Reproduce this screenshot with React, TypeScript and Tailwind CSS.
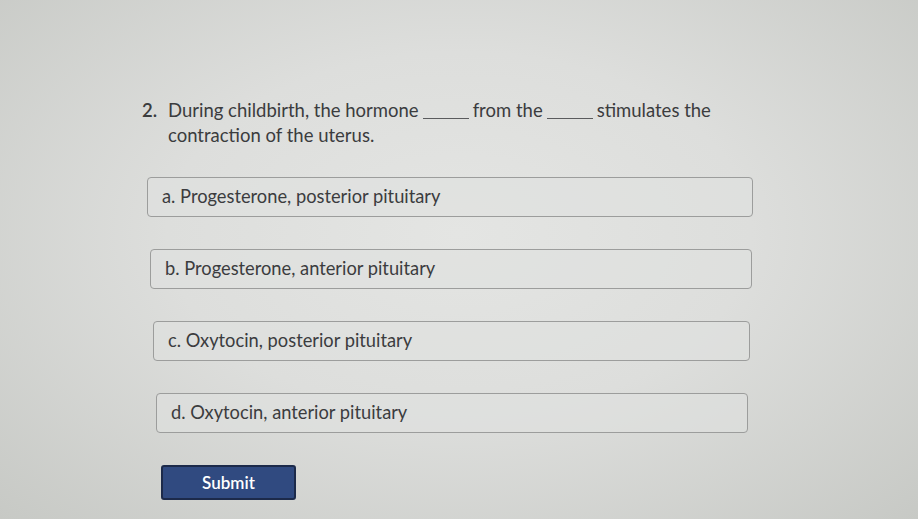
import React from "react";

const options = [
  { label: "a. Progesterone, posterior pituitary", shift: "ml-[147px] w-[606px]" },
  { label: "b. Progesterone, anterior pituitary", shift: "ml-[150px] w-[602px]" },
  { label: "c. Oxytocin, posterior pituitary", shift: "ml-[153px] w-[597px]" },
  { label: "d. Oxytocin, anterior pituitary", shift: "ml-[156px] w-[592px]" },
];

export default function App() {
  return (
    <div
      className="w-[918px] h-[519px] overflow-hidden bg-[radial-gradient(ellipse_at_50%_45%,#e4e5e3_0%,#dddedc_45%,#c7c9c5_100%)] text-[#3b3c3e]"
      style={{ fontFamily: "Lato, 'Noto Sans', sans-serif" }}
    >
      <div className="pt-[98px]">
        {/* question */}
        <div className="flex ml-[142px] text-[18.5px] leading-[25px]">
          <span className="w-[26px] font-semibold">2.</span>
          <div>
            <div className="flex items-end">
              <span>During childbirth, the hormone</span>
              <span className="inline-block w-[46px] h-[1px] bg-[#5a5b5d] mx-[4px] mb-[4px]" />
              <span>from the</span>
              <span className="inline-block w-[46px] h-[1px] bg-[#5a5b5d] mx-[4px] mb-[4px]" />
              <span>stimulates the</span>
            </div>
            <div>contraction of the uterus.</div>
          </div>
        </div>

        {/* answer choices */}
        <div className="mt-[29px] flex flex-col gap-[32px]">
          {options.map((o) => (
            <div
              key={o.label}
              className={`${o.shift} h-[40px] flex items-center px-[14px] rounded-[4px] border border-[#9c9d9c] bg-[#e0e1df]/60 text-[18.3px]`}
            >
              {o.label}
            </div>
          ))}
        </div>

        <button className="mt-[32px] ml-[161px] w-[135px] h-[35px] rounded-[3px] border-2 border-[#1c2a4a] bg-[#304a80] text-white text-[17px] font-semibold">
          Submit
        </button>
      </div>
    </div>
  );
}
